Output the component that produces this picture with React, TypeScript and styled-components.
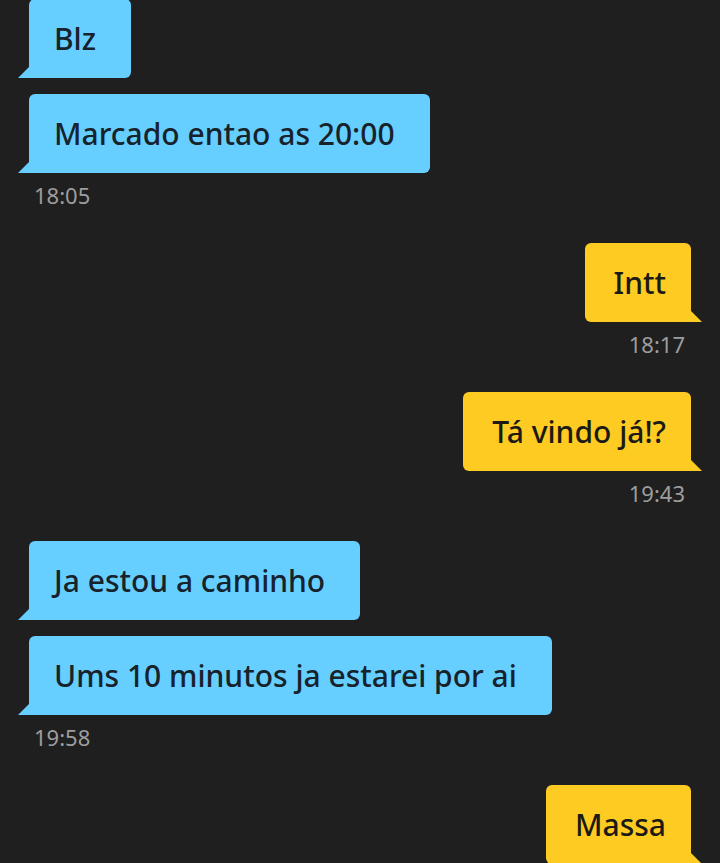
import React from "react";
import styled, { createGlobalStyle, css } from "styled-components";

type Side = "in" | "out";

const GlobalStyle = createGlobalStyle`
  html, body {
    margin: 0;
    padding: 0;
    background: #1f1f1f;
  }
  body {
    font-family: "Noto Sans", "Open Sans", sans-serif;
    overflow: hidden;
  }
`;

const Thread = styled.div`
  display: flex;
  flex-direction: column;
  padding: 0 18px;
  margin-top: -1px;
  min-height: 863px;
  box-sizing: border-box;
  background: #1f1f1f;
`;

const Group = styled.div<{ $side: Side }>`
  display: flex;
  flex-direction: column;
  align-items: ${({ $side }) => ($side === "in" ? "flex-start" : "flex-end")};
  gap: 16px;
  margin-bottom: 34px;
`;

const Bubble = styled.div<{ $side: Side }>`
  position: relative;
  box-sizing: border-box;
  height: 79px;
  display: flex;
  align-items: center;
  font-size: 30px;
  font-weight: 500;
  line-height: 36px;
  color: #17222b;
  white-space: nowrap;
  ${({ $side }) =>
    $side === "in"
      ? css`
          background: #66cfff;
          margin-left: 11px;
          padding: 0 35px 0 25px;
          border-radius: 6px 6px 6px 0;
          &::before {
            content: "";
            position: absolute;
            left: -11px;
            bottom: 0;
            border-style: solid;
            border-width: 0 0 11px 11px;
            border-color: transparent transparent #66cfff transparent;
          }
        `
      : css`
          background: #fecb22;
          margin-right: 11px;
          padding: 0 25px 0 29px;
          border-radius: 6px 6px 0 6px;
          color: #1c1a14;
          &::before {
            content: "";
            position: absolute;
            right: -11px;
            bottom: 0;
            border-style: solid;
            border-width: 11px 0 0 11px;
            border-color: transparent transparent transparent #fecb22;
          }
        `}
`;

const Stamp = styled.div<{ $side: Side }>`
  font-size: 22px;
  line-height: 28px;
  color: #9d9d9d;
  margin-top: -8px;
  ${({ $side }) =>
    $side === "in" ? "margin-left: 16px;" : "margin-right: 17px;"}
`;

type Message = { side: Side; texts: string[]; time?: string };

const messages: Message[] = [
  { side: "in", texts: ["Blz", "Marcado entao as 20:00"], time: "18:05" },
  { side: "out", texts: ["Intt"], time: "18:17" },
  { side: "out", texts: ["Tá vindo já!?"], time: "19:43" },
  {
    side: "in",
    texts: ["Ja estou a caminho", "Ums 10 minutos ja estarei por ai"],
    time: "19:58",
  },
  { side: "out", texts: ["Massa"] },
];

export default function App() {
  return (
    <>
      <GlobalStyle />
      <Thread>
        {messages.map((m, i) => (
          <Group key={i} $side={m.side}>
            {m.texts.map((t) => (
              <Bubble key={t} $side={m.side}>
                {t}
              </Bubble>
            ))}
            {m.time && <Stamp $side={m.side}>{m.time}</Stamp>}
          </Group>
        ))}
      </Thread>
    </>
  );
}
